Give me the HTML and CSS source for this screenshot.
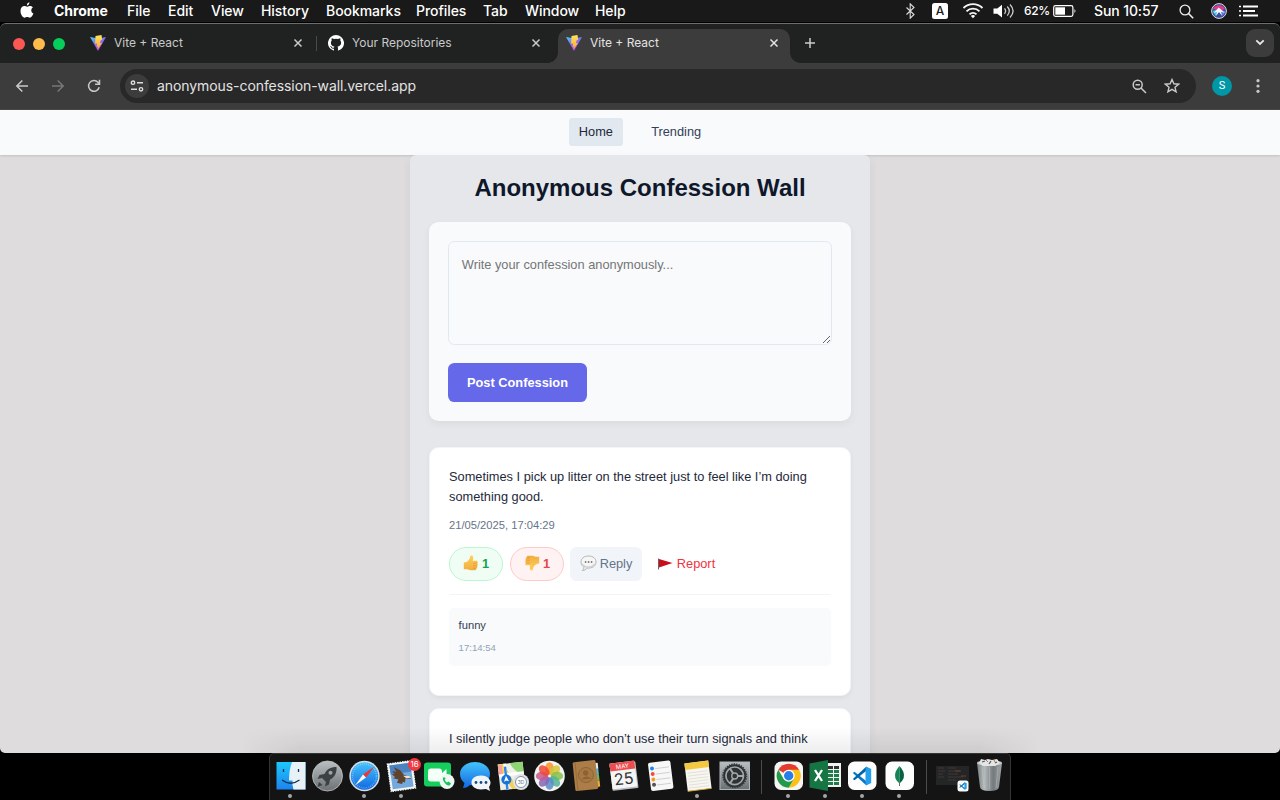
FILE: index.html
```
<!DOCTYPE html>
<html lang="en">
<head>
<meta charset="utf-8">
<title>Vite + React</title>
<link rel="stylesheet" href="styles.css">
</head>
<body>
<svg class="defs" width="0" height="0">
  <defs>
    <linearGradient id="vb" x1="0" y1="0" x2=".6" y2="1"><stop offset="0" stop-color="#41d1ff"/><stop offset=".45" stop-color="#7b79f5"/><stop offset="1" stop-color="#c335f5"/></linearGradient>
    <linearGradient id="vy" x1="0" y1="0" x2="0" y2="1"><stop offset="0" stop-color="#ffe45c"/><stop offset="1" stop-color="#ffa62b"/></linearGradient>
    <linearGradient id="blue" x1="0" y1="0" x2="0" y2="1"><stop offset="0" stop-color="#45c3fb"/><stop offset="1" stop-color="#1168e2"/></linearGradient>
    <linearGradient id="find" x1="0" y1="0" x2="0" y2="1"><stop offset="0" stop-color="#1cc8fb"/><stop offset="1" stop-color="#1d84ee"/></linearGradient>
    <linearGradient id="gray" x1="0" y1="0" x2="0" y2="1"><stop offset="0" stop-color="#b9bfc2"/><stop offset="1" stop-color="#6b7073"/></linearGradient>
    <linearGradient id="bin" x1="0" y1="0" x2="1" y2="0"><stop offset="0" stop-color="#7b8082"/><stop offset=".3" stop-color="#b4b9bb"/><stop offset=".65" stop-color="#74797b"/><stop offset="1" stop-color="#a1a6a8"/></linearGradient>
    <linearGradient id="thumb" x1="0" y1="0" x2="0" y2="1"><stop offset="0" stop-color="#ffd257"/><stop offset="1" stop-color="#f2ac42"/></linearGradient>
    <symbol id="vite" viewBox="0 0 16 16"><path d="M0 2 8 16 16 2 8.5 3.5Z" fill="url(#vb)"/><path d="M11.500 0 5.500 1.100 5 8.800l2.100-.4-.5 3.300 1.200-.3-.4 3.400 4.600-6.900-2.100.3.900-3.200 1.400-.3Z" fill="url(#vy)"/></symbol>
    <symbol id="x" viewBox="0 0 10 10"><path d="m1.500 1.500 7 7m0-7-7 7" fill="none" stroke="currentColor" stroke-width="1.500"/></symbol>
    <symbol id="vscode" viewBox="0 0 24 24"><path d="M1 8.500 3 7l15 12-1 4Z" fill="#0877c9"/><path d="M1 15.500 3 17 18 5 17 1Z" fill="#0065a9"/><path d="m17 .7 6 2.800v17l-6 2.800-.8-4V4.700Z" fill="#239fee"/></symbol>
    <symbol id="thumbsup" viewBox="0 0 16 16"><path d="M.8 7.500Q3 7.400 4.200 6.500C6 5 6.900 3.600 7.100 1.700 7.300-.1 10-.1 10.200 2.400c.1 1.200-.2 2.300-.5 3.300h3.600c1.600 0 1.900 2 .8 2.500 1.200.4 1 2.300-.1 2.600.8.700.4 2.200-.6 2.400.4 1.200-.5 2.100-1.600 2.100H7.600c-1.500 0-2.100-.9-3.400-1L.8 14.200Z" fill="url(#thumb)"/><path d="M10 8.200h4m-3.900 2.600h3.700m-3.800 2.400h3.200" stroke="#d98d2e" stroke-width=".6"/></symbol>
  </defs>
</svg>

<header class="menubar">
  <svg class="apple" width="14" height="16" viewBox="0 0 14 16"><path fill="#fff" d="M9.4.2C8 .5 6.8 1.8 6.9 3.5 8.400 3.500 9.500 1.900 9.400.2ZM12.900 5.500C11.800 4 10.200 3.800 9.200 4.100c-.8.200-1.400.6-2.100.6s-1.500-.5-2.400-.6C2.600 3.900.5 5.600.5 9c0 3.200 2.100 6.700 4.100 6.700 1 0 1.500-.6 2.600-.6s1.500.6 2.500.6c1.700 0 3.200-2.500 3.700-4.100-2.700-1.200-2.800-4.800-.5-6.100Z"/></svg>
  <nav class="menus">
    <b>Chrome</b><span>File</span><span>Edit</span><span>View</span><span>History</span><span>Bookmarks</span><span>Profiles</span><span>Tab</span><span>Window</span><span>Help</span>
  </nav>
  <div class="status">
    <svg width="11" height="16" viewBox="0 0 11 16"><path d="m1.500 4.500 7.500 7-3.800 3.700V.8L9 4.500l-7.500 7" fill="none" stroke="#ddd" stroke-width="1.100"/></svg>
    <span class="lang">A</span>
    <svg class="wifi" width="22" height="16" viewBox="0 0 22 16"><g fill="none" stroke="#f4f4f4" stroke-width="1.900"><path d="M1.500 5a13.500 13.500 0 0 1 19 0M4.500 8.300a9.200 9.200 0 0 1 13 0M7.500 11.400a5 5 0 0 1 7 0"/></g><path d="m8.900 13.100 2.100 2.200 2.100-2.200a3 3 0 0 0-4.200 0" fill="#fff"/></svg>
    <svg class="vol" width="22" height="16" viewBox="0 0 22 16"><path d="M.5 5.500h3.800L9 1.800v12.600L4.300 10.700H.5Z" fill="#fff"/><g fill="none" stroke="#ccc" stroke-width="1.300"><path d="M11.500 5.300q2.300 2.700 0 5.500M14.300 3.500q4 4.600 0 9.100M17 1.500q6.200 6.500 0 13"/></g></svg>
    <span class="pct">62%</span>
    <svg class="batt" width="24" height="12" viewBox="0 0 24 12"><rect x=".7" y=".7" width="19.200" height="10.600" rx="1.800" fill="none" stroke="#fff" stroke-width="1.200"/><rect x="2.300" y="2.300" width="9.700" height="7.400" fill="#fff"/><path d="M21.400 4v4q2.200-2 0-4" fill="#ddd"/></svg>
    <span class="clock">Sun 10:57</span>
    <svg class="spot" width="15" height="15" viewBox="0 0 15 15"><circle cx="6" cy="6" r="4.900" fill="none" stroke="#eee" stroke-width="1.300"/><path d="m9.600 9.600 4.600 4.600" stroke="#eee" stroke-width="1.500"/></svg>
    <svg class="siri" width="16" height="16" viewBox="0 0 16 16"><circle cx="8" cy="8" r="7.400" fill="#3a4b9b" stroke="#ddd"/><path d="M2 6C4 1 12 1 14 6L9 8Z" fill="#e13c81"/><path d="m1.500 8 6-2 1 2-4 5Z" fill="#43c3df"/><path d="m9 7 5 1q0 3-3 5Z" fill="#5e7de2"/><path d="M7.500 4.500 9.500 6l4.500 4-4-1.200L11 13l-3-4-3 4 1-4.200L2.500 10 6 6.500Z" fill="#f2f6ff"/></svg>
    <svg class="list" width="19" height="12" viewBox="0 0 19 12"><path d="M4 1.500h15M4 6h12M4 10.500h15" stroke="#fff" stroke-width="1.800"/><path d="M0 1.500h2M0 6h2M0 10.500h2" stroke="#fff" stroke-width="1.600"/></svg>
  </div>
</header>

<main class="window">
  <div class="tabstrip">
    <div class="lights"><i class="red"></i><i class="amber"></i><i class="green"></i></div>
    <div class="tab first"><svg class="fav"><use href="#vite"/></svg><span>Vite + React</span><svg class="close"><use href="#x"/></svg></div>
    <div class="tab second"><svg class="fav" viewBox="0 0 16 16"><path fill="#fff" d="M8 0a8 8 0 0 0-2.500 15.600c.4.100.5-.2.500-.4v-1.500c-2.200.5-2.700-.9-2.700-.9-.4-.9-.9-1.200-.9-1.200-.7-.5.1-.5.1-.5.800.1 1.200.8 1.200.8.700 1.200 1.900.9 2.300.7.100-.5.300-.9.500-1.100-1.800-.2-3.600-.9-3.600-4 0-.9.300-1.600.8-2.100-.1-.2-.4-1 .1-2.100 0 0 .7-.2 2.200.8a7.500 7.500 0 0 1 4 0c1.500-1 2.200-.8 2.200-.8.400 1.100.2 1.900.1 2.100.5.600.8 1.300.8 2.100 0 3.100-1.900 3.800-3.700 4 .3.200.6.700.6 1.500v2.200c0 .2.100.5.500.4A8 8 0 0 0 8 0Z"/></svg><span>Your Repositories</span><svg class="close"><use href="#x"/></svg></div>
    <div class="tab active"><svg class="fav"><use href="#vite"/></svg><span>Vite + React</span><svg class="close"><use href="#x"/></svg></div>
    <svg class="plus" width="12" height="12" viewBox="0 0 12 12"><path d="M6 1v10M1 6h10" stroke="#ccc" stroke-width="1.500"/></svg>
    <div class="tabsearch"><svg width="10" height="7" viewBox="0 0 10 7"><path d="m1.300 1.300 3.700 3.700 3.700-3.700" fill="none" stroke="#e8e8e8" stroke-width="1.800"/></svg></div>
  </div>
  <div class="toolbar">
    <svg class="nav-ic" width="14" height="14" viewBox="0 0 14 14"><path d="M13 7H2m5.300-5.500L1.800 7l5.500 5.500" fill="none" stroke="#c9c9c9" stroke-width="1.500"/></svg>
    <svg class="nav-ic" width="14" height="14" viewBox="0 0 14 14"><path d="M1 7h11M6.700 1.500 12.200 7l-5.500 5.500" fill="none" stroke="#777" stroke-width="1.500"/></svg>
    <svg class="nav-ic" width="14" height="14" viewBox="0 0 14 14"><path d="M12.200 8.300A5.400 5.400 0 1 1 11 3.300l1.300 1.500M12.500.8v4.400H8.100" fill="none" stroke="#c9c9c9" stroke-width="1.500"/></svg>
    <div class="omnibox">
      <div class="site"><svg width="14" height="12" viewBox="0 0 14 12"><g fill="none" stroke="#ddd" stroke-width="1.400"><circle cx="3" cy="2.700" r="1.700"/><circle cx="11" cy="9.300" r="1.700"/><path d="M7 2.700h6M1 9.300h6"/></g></svg></div>
      <span class="url">anonymous-confession-wall.vercel.app</span>
      <svg class="zoomout" width="15" height="15" viewBox="0 0 15 15"><g fill="none" stroke="#c9c9c9" stroke-width="1.500"><circle cx="5.700" cy="5.700" r="4.500"/><path d="m9 9 5 5M3.500 5.700h4.400"/></g></svg>
      <svg width="16" height="16" viewBox="0 0 16 16"><path d="m8 1.500 1.900 4.300 4.700.4L11 9.300l1.100 4.600L8 11.400l-4.100 2.500L5 9.300 1.400 6.200l4.700-.4Z" fill="none" stroke="#c9c9c9" stroke-width="1.400"/></svg>
    </div>
    <div class="avatar">S</div>
    <svg class="dots" width="4" height="14" viewBox="0 0 4 14"><g fill="#c9c9c9"><circle cx="2" cy="1.700" r="1.600"/><circle cx="2" cy="7" r="1.600"/><circle cx="2" cy="12.300" r="1.600"/></g></svg>
  </div>

  <div class="page">
    <nav class="navbar"><a class="link on">Home</a><a class="link">Trending</a></nav>
    <section class="wall">
      <h1>Anonymous Confession Wall</h1>
      <form class="form">
        <textarea placeholder="Write your confession anonymously..."></textarea>
        <button type="button" class="post">Post Confession</button>
      </form>
      <article class="card">
        <p class="text">Sometimes I pick up litter on the street just to feel like I’m doing something good.</p>
        <p class="date">21/05/2025, 17:04:29</p>
        <div class="actions">
          <button type="button" class="pill up"><svg width="16" height="16"><use href="#thumbsup"/></svg><span>1</span></button>
          <button type="button" class="pill down"><svg width="16" height="16"><use href="#thumbsup" transform="rotate(180 8 8)"/></svg><span>1</span></button>
          <button type="button" class="reply"><svg width="17" height="17" viewBox="0 0 17 17"><path d="M8.500 1C4 1 1 3.500 1 7c0 2.500 1.300 4 3 5 .1 1.500-.6 2.500-1.600 3.500 2 0 3.700-1 4.800-2.500 5 .5 8.800-2 8.800-6 0-3.500-3-6-7.500-6Z" fill="#f6f6f6" stroke="#b3b3b3"/><path d="M2 9c2.500 4 10 4 13 0" fill="none" stroke="#d2d2d2" stroke-width="1.500"/><g fill="#777"><circle cx="5.600" cy="7" r=".9"/><circle cx="8.600" cy="7" r=".9"/><circle cx="11.600" cy="7" r=".9"/></g></svg><span>Reply</span></button>
          <button type="button" class="report"><svg width="16" height="14" viewBox="0 0 16 14"><path d="m2 3 13.500 4L2 11.500Z" fill="#c8101c"/><path d="M1.500 2.500v11" stroke="#666" stroke-width="1"/></svg><span>Report</span></button>
        </div>
        <div class="replies"><div class="comment"><p>funny</p><time>17:14:54</time></div></div>
      </article>
      <article class="card">
        <p class="text">I silently judge people who don’t use their turn signals and think</p>
      </article>
    </section>
  </div>
</main>

<footer class="dock">
  <div class="app run"><svg viewBox="0 0 37 46"><path d="M4.500 8h29v27.500h-29Z" fill="url(#find)"/><path d="M20 8h13.500v27.500H21.500q-1.500-4-1-9H17Q17 16 20 8" fill="#e9f1f8"/><path d="M11.500 15v3m15-3v3M10 26q8.500 6.500 17.500 0" fill="none" stroke="#16314e" stroke-width="1.300"/></svg></div>
  <div class="app"><svg viewBox="0 0 37 46"><circle cx="18.500" cy="22" r="15" fill="url(#gray)" stroke="#c5c9cb" stroke-width=".8"/><path d="M27.500 13c-6 0-10 2.500-12 7l-5 1-2 4 4.500-1 4 4-1 4.500 4-2 1-5c4.500-2 7-6.500 6.500-12.500Z" fill="#3c4144"/><circle cx="21.500" cy="18.800" r="2" fill="#9da3a6"/><path d="m10 28-1.500 5 5-2Z" fill="#3c4144"/></svg></div>
  <div class="app run"><svg viewBox="0 0 37 46"><circle cx="18.500" cy="22" r="15.200" fill="#d9dfe4"/><circle cx="18.500" cy="22" r="13.700" fill="url(#blue)"/><circle cx="18.500" cy="22" r="12" fill="none" stroke="#a9d9fa" stroke-width="1.500" stroke-dasharray=".5 1.500"/><path d="m28.500 12.500-11.500 8 3 3Z" fill="#f33232"/><path d="m9 31.500 8-11 3 3Z" fill="#f7f7f7"/></svg></div>
  <div class="app run"><svg viewBox="0 0 37 46"><g transform="rotate(-8 18.500 22)"><rect x="7" y="9" width="23" height="26" fill="#73a9dc" stroke="#f5f5f5" stroke-width="2"/><path d="M8 10h21v9H8Z" fill="#4b83c1"/><rect x="6" y="8" width="25" height="28" fill="none" stroke="#fff" stroke-width="1" stroke-dasharray="1.500 1"/><path d="m12 12 6 4 3 5 7 4-1 1-5-1-1 4-2-1-1 2-5-2 2-3-5-2 2-1-3-3 3 0-2-3 4 1Z" fill="#60432d"/><path d="m20 22 6 1 2 2-5 0Z" fill="#efe2c8"/></g></svg><span class="badge">16</span></div>
  <div class="app"><svg viewBox="0 0 37 46"><rect x="4" y="8.500" width="27" height="24" rx="3" fill="#16ce5d"/><rect x="8" y="14.500" width="14" height="13" rx="3" fill="#f4fff8"/><path d="m22 19 4.500-4v12L22 24Z" fill="#f4fff8"/><circle cx="27" cy="27.500" r="7.500" fill="#eef7f2"/><path d="M24 23q-2 1-.5 4 3 5 6 4.500l1.500-2-2.500-2-1.500 1q-2-1-2.300-3l1-1Z" fill="#14c457"/></svg></div>
  <div class="app"><svg viewBox="0 0 37 46"><path d="M18 8c-8.500 0-15 5-15 12 0 4 2 7 4.500 9L6 34c3 0 5-1 7-3 12 1.500 20-3 20-11 0-7-6.500-12-15-12" fill="url(#blue)"/><path d="M24 21.500c-6 0-9.500 3-9.500 7s4 7 9.500 7l5-.5 4 2-1-4c4-5 0-11.500-8-11.500" fill="#f2f5f7"/><g fill="#164b87"><circle cx="19" cy="28.500" r="1.400"/><circle cx="24" cy="28.500" r="1.400"/><circle cx="29" cy="28.500" r="1.400"/></g></svg></div>
  <div class="app"><svg viewBox="0 0 37 46"><g transform="rotate(-6 18 22)"><path d="M5 9h25v26H5Z" fill="#eeefe6"/><path d="M17 9h13v12q-9-2-13-12" fill="#8ed574"/><path d="M5 9h6l11 26h-5L5 16Z" fill="#f5ce55"/><path d="M12 9v26M5 20h25" stroke="#fff" stroke-width="3"/><path d="M5 10h4v9H5Z" fill="#f2a2a0"/><path d="M12 12v23" stroke="#3185e7" stroke-width="2.500"/><circle cx="12" cy="25" r="5" fill="#1673d9"/><path d="m12 21 2.500 6-2.500-1-2.500 1Z" fill="#fff"/></g><circle cx="27" cy="28" r="8" fill="#dfe3e5"/><circle cx="27" cy="28" r="5.500" fill="#fff" stroke="#8094a5"/><text x="27" y="30" text-anchor="middle" class="mapnum">3D</text></svg></div>
  <div class="app"><svg viewBox="0 0 37 46"><circle cx="18.500" cy="22" r="15.300" fill="#f2f2f0"/><g fill-opacity=".85"><ellipse cx="18.500" cy="14.500" rx="4.300" ry="6.200" fill="#f79428"/><ellipse cx="18.500" cy="14.500" rx="4.300" ry="6.200" fill="#d5c739" transform="rotate(45 18.500 22)"/><ellipse cx="18.500" cy="14.500" rx="4.300" ry="6.200" fill="#88bf4b" transform="rotate(90 18.500 22)"/><ellipse cx="18.500" cy="14.500" rx="4.300" ry="6.200" fill="#55b493" transform="rotate(135 18.500 22)"/><ellipse cx="18.500" cy="14.500" rx="4.300" ry="6.200" fill="#598ccb" transform="rotate(180 18.500 22)"/><ellipse cx="18.500" cy="14.500" rx="4.300" ry="6.200" fill="#8866b5" transform="rotate(225 18.500 22)"/><ellipse cx="18.500" cy="14.500" rx="4.300" ry="6.200" fill="#c8588e" transform="rotate(270 18.500 22)"/><ellipse cx="18.500" cy="14.500" rx="4.300" ry="6.200" fill="#ef4835" transform="rotate(315 18.500 22)"/></g></svg></div>
  <div class="app"><svg viewBox="0 0 37 46"><g transform="rotate(-6 18 22)"><path d="M28 10h3v6h-3Z" fill="#eee"/><path d="M28 16h3v6h-3Z" fill="#55b8d5"/><path d="M28 22h3v6h-3Z" fill="#79b952"/><path d="M28 28h3v6h-3Z" fill="#efac3a"/><rect x="6" y="7" width="23" height="29" rx="1.500" fill="#ad7d47"/><path d="M8.500 7v29" stroke="#8b6035" stroke-width=".6"/><circle cx="18" cy="21" r="7.500" fill="#a87843" stroke="#825a31" stroke-width=".7"/><circle cx="18" cy="19" r="2.700" fill="#8b6236"/><path d="M13 25q5-5 10 0" fill="#8b6236"/></g></svg></div>
  <div class="app"><svg viewBox="0 0 37 46"><g transform="rotate(-7 18.500 22)"><rect x="6" y="9" width="26" height="26.500" rx="1" fill="#b9bcc0"/><rect x="6" y="8" width="25" height="26" rx="1" fill="#f5f5f5"/><path d="M6 8h25v8H6Z" fill="#ed4d4f"/><text x="18.500" y="14.300" class="month" text-anchor="middle">MAY</text><text x="18.500" y="30.500" class="day" text-anchor="middle">25</text></g></svg></div>
  <div class="app"><svg viewBox="0 0 37 46"><g transform="rotate(-7 18.500 22)"><rect x="7.500" y="7.500" width="22.500" height="28.500" rx="2" fill="#f7f7f8"/><path d="M14 14h14M14 19.500h14M14 25h14M14 30.500h14" stroke="#c6c8cb" stroke-width=".8"/><circle cx="11" cy="13.500" r="2" fill="#1d86f4"/><circle cx="11" cy="19" r="2" fill="#f14b43"/><circle cx="11" cy="24.500" r="2" fill="#f79a2c"/><circle cx="11" cy="30" r="2" fill="#55565a"/></g></svg></div>
  <div class="app run"><svg viewBox="0 0 37 46"><g transform="rotate(-7 18.500 22)"><path d="M7 8h24v28H7Z" fill="#f7f6ef"/><path d="M7 8h24v6.500H7Z" fill="#f5c842"/><path d="M9 18h20M9 21h20M9 24h20M9 27h20M9 30h20M9 33h20" stroke="#d9d8d2" stroke-width=".7"/><path d="M7 36h24" stroke="#d8aa35"/></g></svg></div>
  <div class="app"><svg viewBox="0 0 37 46"><rect x="4" y="8" width="29.500" height="27.500" fill="url(#gray)" stroke="#a9b6bd"/><circle cx="18.700" cy="21.800" r="11.500" fill="#2e3234" stroke="#363a3c" stroke-width="2" stroke-dasharray="1.400 1"/><circle cx="18.700" cy="21.800" r="8.800" fill="none" stroke="#a2a7aa" stroke-width="1.700"/><path d="m19 22 9 0M18.700 22l-5-8M18.700 22l-5 8" stroke="#a2a7aa" stroke-width="2"/><circle cx="18.700" cy="22" r="3" fill="#333" stroke="#a2a7aa" stroke-width="1.300"/></svg></div>
  <i class="sep"></i>
  <div class="app run"><svg viewBox="0 0 37 46"><rect x="4.500" y="7.500" width="28.500" height="28.500" rx="6.500" fill="#f5f5f4"/><path d="M18.700 21.700 8.300 15.700A12 12 0 0 1 29.100 15.700Z" fill="#e33b2e"/><path d="M18.700 15.700h10.400A12 12 0 0 1 18.700 33.700l5.200-9Z" fill="#fbc116"/><path d="M8.300 15.700A12 12 0 0 0 18.700 33.700l5.200-9-10.400 0Z" fill="#229a4a"/><circle cx="18.700" cy="21.700" r="6" fill="#fff"/><circle cx="18.700" cy="21.700" r="4.700" fill="#267ee8"/></svg></div>
  <div class="app run"><svg viewBox="0 0 37 46"><path d="M18 9h16v24H18Z" fill="#f0f4f0"/><g fill="#217b4b"><path d="M21 12h5v3h-5Zm6 0h5v3h-5Z" fill="#333"/><path d="M21 16h5v3h-5Zm6 0h5v3h-5Zm-6 4h5v3h-5Zm6 0h5v3h-5Zm-6 4h5v3h-5Zm6 0h5v3h-5Zm-6 4h5v3h-5Zm6 0h5v3h-5Z"/></g><path d="m2.500 9.500 18.500-3.500v31L2.500 33.500Z" fill="#157543"/><path d="m8 16 7 11m0-11-7 11" stroke="#fff" stroke-width="2.300"/></svg></div>
  <div class="app run"><svg viewBox="0 0 37 46"><rect x="4" y="7.500" width="28.500" height="28.500" rx="6.500" fill="#fdfdfd"/><use href="#vscode" x="8" y="12" width="20" height="20"/></svg></div>
  <div class="app run"><svg viewBox="0 0 37 46"><rect x="4.500" y="7.500" width="28.500" height="28.500" rx="6.500" fill="#fdfdfd"/><path d="M18.500 12q-9 10 0 17.500Z" fill="#128556"/><path d="M18.500 12q9 10 0 17.500Z" fill="#09623f"/><path d="M18.500 27v5" stroke="#517a65"/></svg></div>
  <i class="sep"></i>
  <div class="app"><svg viewBox="0 0 37 46"><path d="M1 12h33v19H1Z" fill="#242526"/><path d="M3 14h6m-6 3h7m-7 3h5m-5 3h6m4-9h8m-8 3h12m-12 3h10m-10 3h15m-15 3h8" stroke="#4a3f3e" stroke-width=".7"/><path d="M20 17h6m0 5h5" stroke="#7d4438" stroke-width=".8"/><rect x="22.500" y="26.500" width="11" height="11" rx="2.500" fill="#fafafa"/><use href="#vscode" x="24" y="28" width="8" height="8"/></svg></div>
  <div class="app"><svg viewBox="0 0 37 46"><path d="m5 9 3 24q.5 4 9.500 4t9.500-4l3-24Z" fill="url(#bin)"/><path d="m10 13 2 21m5.500-21v22M26 13l-2 21" stroke="#d0d4d6" stroke-opacity=".35"/><ellipse cx="17.500" cy="9" rx="12.500" ry="2.700" fill="#c4c8ca"/><path d="m7 9 2-4 4 1 3-1 4 1 5-1 3 4-5 3-12 0Z" fill="#e5e5e2"/><path d="m10 8 3-1m4 3 2-3m4 2 2-1" stroke="#486179" stroke-width="1.300"/><path d="m14 6 2 2m6-2 1 2" stroke="#d1684e"/></svg></div>
</footer>
</body>
</html>
```

FILE: styles.css
```
* { box-sizing: border-box; }
body { margin: 0; width: 1280px; height: 800px; overflow: hidden; background: #000; display: flex; flex-direction: column; font-family: "Liberation Sans", Arial, sans-serif; }
p, h1 { margin: 0; }
svg { display: block; flex: none; }
button { font: inherit; }
.defs { position: absolute; }

/* menu bar */
.menubar { height: 22px; flex: none; background: #191919; color: #fff; display: flex; align-items: center; font: 500 14px/22px Inter, sans-serif; white-space: nowrap; }
.apple { margin: 0 20px 2px 20px; }
.menus { display: grid; grid-template-columns: 73px 41px 43px 50px 65px 90px 67px 42px 70px 40px; letter-spacing: -.05px; }
.menus b { font-weight: 700; }
.status { margin-left: auto; display: flex; align-items: center; padding-right: 22px; }
.lang { width: 16px; height: 16px; margin-left: 16px; border-radius: 2.500px; background: #fff; color: #191919; font-size: 12px; line-height: 16px; text-align: center; }
.wifi { margin-left: 14px; }
.vol { margin-left: 9px; }
.pct { width: 29px; margin-left: 9px; font-size: 12px; letter-spacing: -.3px; }
.batt { margin-left: 0; }
.clock { width: 66px; margin-left: 17px; letter-spacing: -.1px; }
.spot { margin-left: 19px; }
.siri { margin-left: 17px; }
.list { margin-left: 12px; }

/* browser window */
.window { position: relative; height: 731px; margin-top: 0; flex: none; display: flex; flex-direction: column; overflow: hidden; border-top: 1px solid #000; border-radius: 0 0 5px 5px; }
.window::after { content: ""; position: absolute; left: 240px; right: 240px; bottom: 0; height: 26px; background: linear-gradient(to bottom, transparent, rgba(0,0,0,.07)); -webkit-mask-image: linear-gradient(to right, transparent, #000 60px, #000 740px, transparent); mask-image: linear-gradient(to right, transparent, #000 60px, #000 740px, transparent); }
.tabstrip { height: 40px; flex: none; display: flex; align-items: center; background: #202221; border: solid #6c6e6d; border-width: 1px 0 0; border-radius: 6px 6px 0 0; color: #c9c9c9; }
.lights { display: flex; gap: 8px; width: 78px; padding-left: 13px; }
.lights i { width: 12px; height: 12px; border-radius: 50%; }
.red { background: #fd5754; }
.amber { background: #fdbc4b; }
.green { background: #05ce5b; }
.tab { display: flex; align-items: center; width: 238px; height: 34px; padding: 0 13px 2px 12px; font: 400 12px/18px Inter, sans-serif; letter-spacing: 0; }
.tab span { flex: 1; padding-left: 8px; }
.fav { width: 16px; height: 16px; }
.close { width: 10px; height: 10px; }
.tab.second { background: linear-gradient(#494b4a, #494b4a) 0 9px / 1px 15px no-repeat; }
.tab.active { position: relative; align-self: flex-end; width: 232px; margin-left: 4px; padding: 0 11px 6px 8px; background: #3c3c3c; border-radius: 10px 10px 0 0; color: #e3e3e3; }
.tab.active::before, .tab.active::after { content: ""; position: absolute; bottom: 0; width: 10px; height: 10px; }
.tab.active::before { left: -10px; background: radial-gradient(circle at 0 0, transparent 9.500px, #3c3c3c 10px); }
.tab.active::after { right: -10px; background: radial-gradient(circle at 100% 0, transparent 9.500px, #3c3c3c 10px); }
.plus { margin: 0 0 2px 14px; }
.tabsearch { width: 28px; height: 28px; margin: 0 6px 2px auto; border-radius: 9px; background: #3c3c3c; display: grid; place-items: center; }
.toolbar { height: 47px; flex: none; display: flex; align-items: center; background: #3c3c3c; border-bottom: 1px solid #474747; padding-left: 15px; }
.nav-ic { margin-right: 22px; }
.omnibox { display: flex; align-items: center; width: 1076px; height: 34px; margin-left: -3px; padding: 0 16px 0 5px; border-radius: 17px; background: #282828; }
.site { width: 24px; height: 24px; border-radius: 50%; background: #3c3c3c; display: grid; place-items: center; }
.url { flex: 1; padding-left: 8px; color: #e3e3e3; font: 400 14px/20px Inter, sans-serif; letter-spacing: -.075px; }
.zoomout { margin-right: 17px; }
.avatar { width: 20px; height: 20px; margin-left: 16px; border-radius: 50%; background: #0097a7; color: #fff; font: 400 11px/20px Roboto, sans-serif; text-align: center; }
.dots { margin-left: 24px; }

/* confession wall */
.page { flex: 1; min-height: 0; overflow: hidden; background: #dedcdd; display: flex; flex-direction: column; }
.navbar { height: 45px; flex: none; display: flex; justify-content: center; align-items: flex-start; gap: 19px; padding: 8px 0; background: #f8fafc; box-shadow: 0 1px 2px rgba(0,0,0,.12); }
.link { height: 28px; padding: 0 9.600px; border-radius: 3.200px; color: #334155; font-size: 12.800px; line-height: 28px; }
.link.on { background: #e2e8f0; color: #1e293b; }
.wall { width: 460px; margin: 0 auto; flex: none; padding: 18px 19px; background: #e5e7eb; border-radius: 6px 6px 0 0; box-shadow: 0 3px 10px rgba(0,0,0,.06); }
h1 { height: 49px; text-align: center; color: #0f172a; font-size: 24px; line-height: 30px; }
.form { height: 199px; padding: 19px; border-radius: 9.600px; background: #f8fafc; box-shadow: 0 3px 8px rgba(0,0,0,.05); }
textarea { display: block; width: 384px; height: 104px; padding: 12.800px; border: 1px solid #e2e8f0; border-radius: 6.400px; background: #f8fafc; font: 12.800px/20px "Liberation Sans", Arial, sans-serif; }
textarea::placeholder { color: #757575; }
.post { display: block; width: 139px; height: 39px; margin-top: 18px; padding: 0; border: 0; border-radius: 6.400px; background: #6568e8; color: #fff; font-size: 12.800px; font-weight: 700; }
.card { height: 249px; margin-top: 26px; padding: 19px; border: 1px solid #f1f5f9; border-radius: 9.600px; background: #fff; box-shadow: 0 2px 5px rgba(0,0,0,.05); }
.card + .card { margin-top: 12px; padding-top: 20px; }
.text { color: #1e293b; font-size: 12.800px; line-height: 20px; }
.date { margin-top: 10px; color: #64748b; font-size: 11.200px; line-height: 17px; }
.actions { display: flex; margin-top: 13px; height: 34px; font-size: 12.800px; }
.actions button { display: flex; align-items: center; justify-content: center; height: 34px; padding: 0 0 2px; }
.pill { width: 54px; margin-right: 7px; gap: 3px; border: 1px solid; border-radius: 17px; font-weight: 700; }
.up { background: #f0fdf4; border-color: #bbf7d0; color: #16a34a; }
.down { background: #fef2f2; border-color: #fecaca; color: #e5484d; margin-right: 6px; }
.reply { width: 72px; gap: 3px; border: 0; border-radius: 6.400px; background: #f1f5f9; color: #64748b; }
.report { width: 60px; margin-left: 14px; gap: 4px; border: 0; background: none; color: #ef3340; }
.replies { margin-top: 13px; padding-top: 13px; border-top: 1px solid #f1f5f9; }
.comment { height: 58px; padding: 9px 9.600px; border-radius: 4.800px; background: #f8fafc; color: #334155; font-size: 11.200px; line-height: 17px; }
.comment time { display: block; margin-top: 6px; color: #94a3b8; font-size: 9.600px; line-height: 16px; }

/* dock */
.dock { width: 742px; height: 47px; flex: none; align-self: center; display: flex; padding-left: 2px; background: #141414; border: solid #343434; border-width: 1px 1px 0; border-radius: 5px 5px 0 0; }
.app { position: relative; width: 37px; height: 46px; flex: none; }
.app > svg { width: 37px; height: 46px; }
.app.run::after { content: ""; position: absolute; left: 16px; top: 40px; width: 4px; height: 4px; border-radius: 50%; background: #a5a5a5; }
.sep { width: 17px; flex: none; margin: 6px 0; background: linear-gradient(#4b4b4b, #4b4b4b) 8px 0 / 1px 100% no-repeat; }
.badge { position: absolute; left: 25px; top: 4px; width: 13px; height: 13px; border-radius: 50%; background: #f33840; color: #fff; font: 8px/13px Inter, sans-serif; text-align: center; }
.mapnum { font: 5px Inter, sans-serif; fill: #657887; }
.month { font: 6px Inter, sans-serif; fill: #fff; }
.day { font: 16px Inter, sans-serif; fill: #333; }
```
